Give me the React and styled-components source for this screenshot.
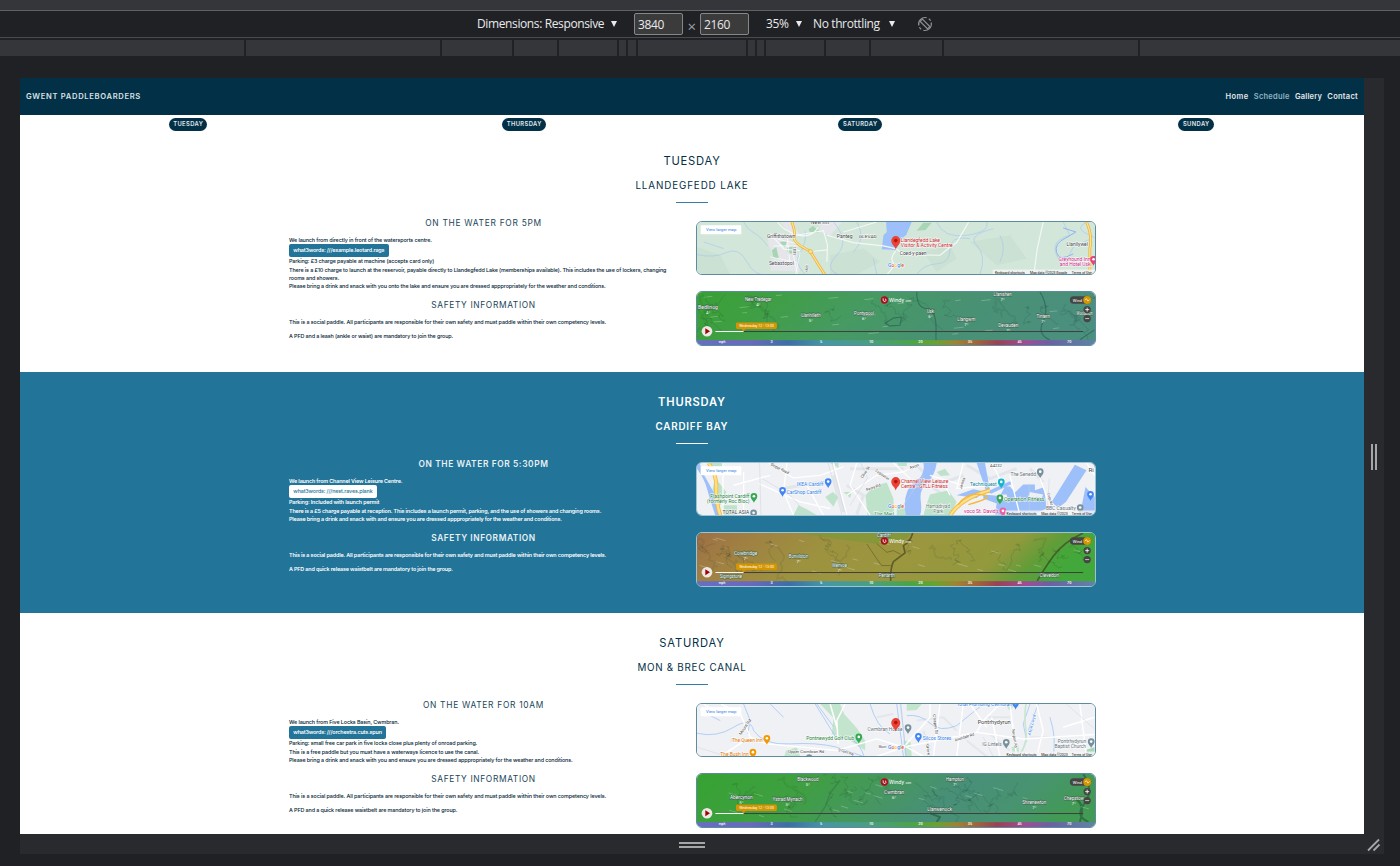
import React from "react";
import styled, { createGlobalStyle } from "styled-components";

const GlobalStyle = createGlobalStyle`
  * { box-sizing: border-box; }
  body { margin: 0; background: #202124; overflow: hidden; }
  h1, h2, h3, p { margin: 0; }
`;

/* ---------- Browser tools ---------- */

const Shell = styled.div`
  display: flex;
  flex-direction: column;
  width: 1400px;
  height: 866px;
  overflow: hidden;
  background: #202124;
`;

const TopStrip = styled.div`
  height: 11px;
  flex: none;
  background: #35363a;
  border-bottom: 1px solid #606164;
`;

const Toolbar = styled.div`
  display: flex;
  align-items: center;
  height: 27px;
  flex: none;
  padding-left: 477px;
  border-bottom: 1px solid #4a4b4e;
  color: #e8eaed;
  font: 400 12px/22px "Open Sans", sans-serif;
  letter-spacing: -0.38px;
  white-space: nowrap;
`;

const Select = styled.div`
  display: flex;
  align-items: center;
  width: ${(p) => p.$width}px;
  margin: 0 ${(p) => p.$after}px 0 ${(p) => p.$before || 0}px;
  justify-content: space-between;
`;

const Caret = styled.i`
  border: 4px solid transparent;
  border-width: 6px 3.5px 0;
  border-top-color: #e8eaed;
`;

const SizeField = styled.span`
  width: 49px;
  height: 22px;
  padding-left: 3px;
  border: 1px solid #868789;
  border-radius: 2px;
  background: #3b3b3b;
`;

const Times = styled.span`
  width: 17px;
  padding-top: 4px;
  text-align: center;
  font-size: 15px;
  color: #9aa0a6;
`;

const Ruler = styled.div`
  display: flex;
  gap: 2px;
  height: 18px;
  flex: none;
  padding: 2px 0 0;
`;

const RulerSpan = styled.div`
  flex: none;
  width: ${(p) => p.$width}px;
  background: #35363a;
`;

const Stage = styled.div`
  display: grid;
  grid-template: 756px 20px / 1344px 20px;
  width: 1364px;
  margin: 22px 0 0 20px;
`;

const Handle = styled.div`
  display: flex;
  align-items: center;
  justify-content: center;
  padding-top: 2px;
  background: #292a2d;
`;

const Grip = styled.i`
  width: ${(p) => (p.$wide ? 26 : 6)}px;
  height: ${(p) => (p.$wide ? 6 : 26)}px;
  border: solid #a5a6a8;
  border-width: ${(p) => (p.$wide ? "2px 0" : "0 2px")};
`;

/* ---------- Website ---------- */

const Site = styled.div`
  height: 756px;
  overflow: hidden;
  background: #fff;
  color: #023047;
  font-family: Inter, sans-serif;
`;

const Nav = styled.nav`
  display: flex;
  align-items: center;
  justify-content: space-between;
  height: 37px;
  padding: 0 6px;
  background: #023047;
  color: #d9e0e4;
  font-size: 7px;
  font-weight: 600;
`;

const Brand = styled.span`
  font-size: 7.6px;
  letter-spacing: 0.68px;
`;

const NavLinks = styled.div`
  display: flex;
  gap: 5.2px;
`;

const NavLink = styled.span`
  font-size: 7.5px;
  letter-spacing: ${(p) => p.$track}px;
  color: ${(p) => (p.$active ? "#8fb3c4" : "#e3e8eb")};
`;

const DayBar = styled.div`
  display: grid;
  grid-template-columns: repeat(4, 1fr);
  justify-items: center;
  height: 16px;
  padding-top: 3px;
`;

const DayPill = styled.span`
  height: 13px;
  padding: 0 4.2px 0 4.7px;
  border-radius: 7px;
  background: #023047;
  color: #e3e8eb;
  font-size: 5.8px;
  font-weight: 600;
  line-height: 12.5px;
  letter-spacing: 0.4px;
`;

const Section = styled.section`
  display: flex;
  flex-direction: column;
  align-items: center;
  height: 241px;
  padding-top: 23px;
  background: ${(p) => (p.$dark ? "#227499" : "#fff")};
  color: ${(p) => (p.$dark ? "#fff" : "#023047")};
  font-weight: ${(p) => (p.$dark ? 600 : 400)};
  white-space: nowrap;
`;

const DayTitle = styled.h1`
  font-size: 11.2px;
  font-weight: inherit;
  line-height: 14px;
  letter-spacing: 0.8px;
`;

const PlaceTitle = styled.h2`
  margin-top: 11px;
  font-size: 9.8px;
  font-weight: inherit;
  line-height: 14px;
  letter-spacing: ${(p) => p.$track}px;
`;

const Rule = styled.div`
  width: 32px;
  height: 1.4px;
  margin: 8.5px 0 13.1px;
  background: ${(p) => (p.$dark ? "#fff" : "#2f7fa3")};
`;

const Columns = styled.div`
  display: grid;
  grid-template-columns: 389px 399.5px;
  column-gap: 18px;
  width: 806.5px;
  margin-left: 0.5px;
`;

const SubHeading = styled.h3`
  margin: ${(p) => (p.$spaced ? 8 : 0)}px 0 6px;
  text-align: center;
  font-size: 8.4px;
  font-weight: inherit;
  line-height: 14px;
  letter-spacing: ${(p) => p.$track}px;
  opacity: 0.9;
`;

const Copy = styled.p`
  margin-bottom: ${(p) => p.$after || 0}px;
  font-size: 5.4px;
  font-weight: ${(p) => (p.$dark ? 600 : 500)};
  line-height: 8px;
  letter-spacing: ${(p) => (p.$dark ? -0.138 : -0.112) + (p.$loose ? 0.018 : 0)}px;
  color: ${(p) => (p.$dark ? "#fff" : "#012233")};
`;

const WordsBadge = styled.div`
  width: fit-content;
  height: 13px;
  padding: 0 4.3px;
  border-radius: 2px;
  background: ${(p) => (p.$dark ? "#fff" : "#227499")};
  color: ${(p) => (p.$dark ? "#227499" : "#fff")};
  font-size: 5.4px;
  font-weight: ${(p) => (p.$dark ? 500 : 600)};
  line-height: 12.5px;
  letter-spacing: ${(p) => (p.$dark ? -0.135 : -0.165)}px;
`;

const Media = styled.div`
  display: flex;
  flex-direction: column;
  gap: 16px;
  padding-top: 5px;
`;

const Frame = styled.div`
  height: 54.5px;
  border: 1px solid ${(p) => (p.$dark ? "#9cc4d6" : "#5d8ba0")};
  border-radius: 6px;
  overflow: hidden;
  svg { display: block; width: 100%; height: 100%; }
`;

/* ---------- Maps ---------- */

const MapText = styled.text`
  font-family: Roboto, sans-serif;
  font-size: ${(p) => p.$size || 15}px;
  font-weight: ${(p) => p.$weight || 400};
`;

function Label({ at, w, children, fill = "#3c4043", size, weight, halo = "#fff", rotate }) {
  const [x, y] = at;
  return (
    <MapText
      x={x}
      y={y}
      $size={size}
      $weight={weight}
      fill={fill}
      stroke={halo}
      strokeWidth={halo === "none" ? 0 : 2.5}
      paintOrder="stroke"
      textLength={w}
      lengthAdjust="spacingAndGlyphs"
      transform={rotate ? `rotate(${rotate} ${x} ${y})` : undefined}
    >
      {children}
    </MapText>
  );
}

function Pin({ x, y, color, scale = 1, dot = "#fff" }) {
  return (
    <g transform={`translate(${x} ${y}) scale(${scale})`}>
      <path d="M0 17C-2 9-10 6-10-3A10 10 0 0 1 10-3C10 6 2 9 0 17Z" fill={color} />
      <circle cy="-3" r="4" fill={dot} />
    </g>
  );
}

function MapControls({ short }) {
  return (
    <>
      <rect x="31" y="30" width="122" height="27" rx="2" fill="#fff" />
      <Label at={[47, 48]} w={91} fill="#2f7de8" size={12} halo="none">View larger map</Label>
      <Pin x={617} y={80} color="#ea4335" scale={1.35} dot="#b31412" />
      <Label at={[594, 156]} w={48} size={16} weight={500}>
        <tspan fill="#4285f4">G</tspan>
        <tspan fill="#ea4335">o</tspan>
        <tspan fill="#fbbc05">o</tspan>
        <tspan fill="#4285f4">g</tspan>
        <tspan fill="#34a853">l</tspan>
        <tspan fill="#ea4335">e</tspan>
      </Label>
      <rect x={short ? 946 : 908} y="163" width="310" height="17" fill="#f5f5f5" opacity=".8" />
      <Label at={[short ? 950 : 915, 175]} w={90} size={10} fill="#111" halo="none">Keyboard shortcuts</Label>
      <Label at={[short ? 1054 : 1020, 175]} w={short ? 80 : 112} size={10} fill="#111" halo="none">
        {short ? "Map data ©2023" : "Map data ©2023 Google"}
      </Label>
      <Label at={[1146, 175]} w={60} size={10} fill="#111" halo="none">Terms of Use</Label>
    </>
  );
}

const line = (stroke, width) => ({ fill: "none", stroke, strokeWidth: width, strokeLinejoin: "round" });

function LakeMap() {
  return (
    <svg viewBox="20 20 1194 158" preserveAspectRatio="none">
      <rect width="1230" height="200" fill="#d2e6da" />
      <path d="M20 95L90 120L120 178H20ZM420 120L520 100L570 140L500 178H420ZM840 80L960 60L1010 130L920 150ZM700 110L780 90L800 130L740 170Z" fill="#cae1d3" />
      <path d="M232 66L280 52L322 98L318 120L330 170L240 166L250 120L236 92ZM385 20H455L420 62L392 50ZM270 20H300L330 58L310 70Z" fill="#e4e6ea" />
      <path d="M355 42L368 32L385 45V52H360ZM245 105L258 95L266 130L250 128ZM290 98L308 92V115H294ZM268 80L290 78L284 96Z" fill="#a8d5b4" />
      <path d="M680 46L700 22H725L706 44Z" fill="#a8d5b4" />
      <path d="M588 20H665L648 60L632 72L618 104L575 102L580 60L590 50Z" fill="#9dc0fa" />
      <g {...line("#a3c4f5", 1.7)}>
        <path d="M20 118Q70 130 108 112T170 140T235 178M160 20Q170 42 190 52T232 92M345 48Q350 80 330 112T345 178M430 20Q480 78 440 120T445 178M500 20Q530 70 490 110M680 178Q700 148 740 146T780 102T840 70M740 20Q760 70 830 60T890 20M870 178Q890 120 860 90T910 40M930 60Q950 100 930 140M1120 20L1140 60Q1080 76 1100 120T1150 96L1200 72M1190 20Q1150 40 1200 60T1210 130M550 130L560 178M40 80L100 100" />
      </g>
      <path d="M1120 38L1158 50L1128 68Q1092 84 1100 112T1150 116" {...line("#8fb4ee", 3)} />
      <g {...line("#f4f8f6", 3.5)}>
        <path d="M262 20Q278 45 320 58T384 36M320 60L400 46L412 90L410 140M240 56L282 102L330 106M410 60L490 82L580 92L617 100L640 118L750 120Q780 96 800 82L836 20M617 108Q600 125 608 140T590 178M1060 20L1042 100L1032 178M460 50L560 20M372 108L412 104" />
      </g>
      <g {...line("#fff", 2)}><path d="M290 60L300 150M262 72L318 84M250 92L324 92M330 110L316 178M306 105L322 178M240 125L320 142" /></g>
      <path d="M305 20Q316 50 312 66T360 108Q385 150 405 180M1190 20Q1208 60 1200 100V178" {...line("#f2ad26", 8)} />
      <path d="M305 20Q316 50 312 66T360 108Q385 150 405 180M1190 20Q1208 60 1200 100V178" {...line("#fde293", 4)} />
      <circle cx="361" cy="109" r="6" fill="#fde293" stroke="#f2ad26" strokeWidth="2" />
      <Label at={[362, 26]} w={55}>New Inn</Label>
      <Label at={[230, 68]} w={85}>Griffithstown</Label>
      <Label at={[236, 149]} w={75}>Sebastopol</Label>
      <Label at={[440, 68]} w={47}>Panteg</Label>
      <Label at={[506, 68]} w={54} size={13}>GLEVAD</Label>
      <Label at={[629, 120]} w={80}>Coed-y-paen</Label>
      <Label at={[1130, 92]} w={64}>Llanllywel</Label>
      <Label at={[632, 79]} w={118} fill="#c5221f">Llandegfedd Lake</Label>
      <Label at={[632, 94]} w={156} fill="#c5221f">Visitor &amp; Activity Centre</Label>
      <Label at={[1106, 138]} w={96} fill="#d01884">Greyhound Inn</Label>
      <Label at={[1110, 153]} w={92} fill="#d01884">and Hotel Usk</Label>
      <Pin x={1211} y={135} color="#ec407a" />
      <Label at={[318, 120]} w={25} size={11} rotate={-90}>A4042</Label>
      <Label at={[352, 172]} w={24} size={11} rotate={-82}>A4051</Label>
      <MapControls />
    </svg>
  );
}

function BayMap() {
  return (
    <svg viewBox="20 23 1194 158" preserveAspectRatio="none">
      <rect width="1230" height="200" fill="#f0f1f4" />
      <g {...line("#e2e5ea", 9)}>
        <path d="M480 40H640M470 90L520 120L500 178M680 30L740 90L820 60M830 30L900 70L980 40M430 60L460 170M1020 40L1060 80M280 100L390 80M720 90L760 120" />
      </g>
      <path d="M55 23H100L88 60ZM75 68L108 110L90 150L60 130ZM95 150H140V180H95ZM552 92L590 82L610 130L612 180H532L526 120ZM720 118L775 105L800 140L780 180H700L712 140ZM325 150L350 162L380 180H310ZM405 125L428 110L444 125L430 155ZM460 110H485L480 128ZM620 150L650 160V180H620ZM740 50L765 40L780 60L752 62ZM420 23H445V38ZM620 23H650V32H626Z" fill="#bfe3ca" />
      <path d="M700 23H740Q735 60 710 85Q688 102 692 135T690 180H648Q638 142 652 108T688 70Q705 48 700 23Z" fill="#9dbffa" />
      <path d="M20 40Q42 70 50 100T75 180H92Q80 130 65 102T36 50L28 23H20Z" fill="#9dbffa" />
      <path d="M880 118L930 122L945 94H960L975 112L1000 88H1035V105L1062 96L1070 160L1030 178H915L920 145L880 130ZM1085 140L1155 28L1190 45L1128 140L1105 158ZM860 23H885L900 105L960 78L965 86L905 115L890 112ZM800 120L850 102L880 108L860 128Z" fill="#9dbffa" />
      <path d="M1187 95L1215 125V180H1170Z" fill="#9dbffa" />
      <path d="M935 118H950L955 135H935ZM1020 110L1060 118L1056 128L1015 124Z" fill="#edeff2" />
      <g {...line("#fff", 4)}>
        <path d="M98 23V180M235 23L310 68L390 60L460 35M205 85L330 140L420 160M430 23L470 180M500 23L480 90L540 180M470 120L560 60L640 50L690 23M610 23L660 70M820 23L800 100L905 90M960 60L990 180M1040 40L1090 178M1190 23L1215 60M160 50V180M290 23L280 110L310 180M350 90L400 180M720 60L820 90M760 80L780 120M130 90L240 60M905 23L940 90" />
      </g>
      <g {...line("#cdd2da", 1.5)}>
        <path d="M208 23L212 180M216 70L300 120L350 178M414 23L455 178M425 23L466 178M640 150L700 60M1078 70L1072 178M1018 85V178M512 23L532 68L480 150" />
      </g>
      <path d="M55 23Q80 60 78 100T90 180M780 182Q810 130 900 105" {...line("#f4b93c", 12)} />
      <path d="M55 23Q80 60 78 100T90 180M780 182Q810 130 900 105" {...line("#fddf8c", 7)} />
      <path d="M805 148Q830 110 875 118T835 148" {...line("#f4b93c", 4)} />
      <Label at={[320, 91]} w={80} fill="#2f7de8">IKEA Cardiff</Label>
      <Pin x={414} y={82} color="#4285f4" />
      <Label at={[289, 117]} w={105} fill="#2f7de8">CarShop Cardiff</Label>
      <Pin x={277} y={108} color="#4285f4" />
      <Label at={[60, 128]} w={118} fill="#188038">Flashpoint Cardiff</Label>
      <Label at={[50, 142]} w={128} fill="#188038">(formerly Roc Bloc)</Label>
      <Pin x={191} y={126} color="#34a853" />
      <Label at={[97, 178]} w={80}>TOTAL ASIA</Label>
      <Pin x={190} y={176} color="#78909c" />
      <Label at={[633, 84]} w={142} fill="#c5221f">Channel View Leisure</Label>
      <Label at={[633, 99]} w={140} fill="#c5221f">Centre - GTLL Fitness</Label>
      <Label at={[708, 158]} w={72} fill="#5f7a70">Hamadryad</Label>
      <Label at={[730, 172]} w={30} fill="#5f7a70">Park</Label>
      <Label at={[552, 180]} w={60} fill="#188038" size={13}>The Marl</Label>
      <Label at={[840, 91]} w={80} fill="#00838f">Techniquest</Label>
      <Pin x={934} y={83} color="#12b5cb" />
      <Label at={[942, 138]} w={122} fill="#188038">Operation Fitness</Label>
      <Pin x={930} y={131} color="#34a853" />
      <Label at={[822, 173]} w={105} fill="#d01884">voco St. David's</Label>
      <Pin x={939} y={170} color="#ec5fa0" />
      <Label at={[962, 61]} w={76} fill="#5f6f78">The Senedd</Label>
      <Pin x={1051} y={52} color="#78909c" />
      <Label at={[1068, 165]} w={90} fill="#5f6f78">BBC Casualty</Label>
      <Pin x={1171} y={160} color="#78909c" />
      <Pin x={1202} y={120} color="#4285f4" />
      <Label at={[1196, 51]} w={16}>Ri</Label>
      <Label at={[240, 30]} w={60} size={13} rotate={27}>Sloper Road</Label>
      <Label at={[530, 108]} w={45} size={12} rotate={-20}>Ferry Rd</Label>
      <Label at={[518, 70]} w={40} size={12} rotate={-58}>Clive St</Label>
      <Label at={[555, 48]} w={48} size={12} rotate={35}>Corporation</Label>
      <Label at={[815, 102]} w={35} size={12} rotate={-72}>James</Label>
      <Label at={[660, 42]} w={30} size={12} rotate={-20}>Avon</Label>
      <Label at={[900, 35]} w={36} size={12}>A4232</Label>
      <Label at={[1072, 115]} w={36} size={11} rotate={75}>Cargo Rd</Label>
      <g transform="translate(0 3)"><MapControls short /></g>
    </svg>
  );
}

function CanalMap() {
  return (
    <svg viewBox="20 20 1194 158" preserveAspectRatio="none">
      <rect width="1230" height="200" fill="#f0f1f4" />
      <path d="M390 20H450L462 50L500 92L525 130V160L480 130L425 110L430 62ZM288 160L320 150L330 178H282ZM650 20H695L680 38L650 40ZM640 130L662 134L665 178H645ZM945 20H975L960 40ZM965 150L985 145L990 178H970Z" fill="#c3e5cd" />
      <path d="M1190 158L1214 150V178H1186Z" fill="#a8d5b4" />
      <g {...line("#e3e6ec", 6)}><path d="M560 60L610 50M680 70L760 60L800 100M890 60H960M900 110L960 160M1020 120H1090M120 130H220M700 100L720 160M830 130L890 178" /></g>
      <g {...line("#a3c8f8", 2.5)}>
        <path d="M20 108Q80 122 130 90T190 100Q220 145 300 140T440 150L520 178M160 20L180 70L172 110M240 20L280 60M375 20L400 60L440 125Q500 110 522 178M380 20L430 88M620 20L640 178M632 20L648 178M650 55Q690 50 720 78T800 85L880 20M540 20Q560 90 600 110M1020 20L1000 80L1010 130L990 178M1045 20L1015 100M1080 60Q1100 120 1090 178M40 45L90 70" />
      </g>
      <path d="M1008 20Q1002 60 1008 100T985 178" {...line("#c9e6d2", 5)} />
      <g {...line("#fff", 4.5)}>
        <path d="M92 20L150 50L180 120L230 140L440 160L560 125L640 150L740 130L860 105L880 70L920 30L940 20M180 120L90 178M70 40L40 20M420 20L440 90M465 20L440 70L444 140M560 178L640 150L720 60V20M730 178L750 20M800 178L820 20M860 105L1000 125L1214 112M905 60L930 178M960 20L980 178M1040 20L1060 100L1040 178M1120 90L1214 60M1170 20L1190 178M650 150L700 178M840 20L890 90" />
      </g>
      <g {...line("#cfd6e0", 1.5)}><path d="M630 20L650 178M880 120L910 178M1130 20L1214 95M20 150L110 178" /></g>
      <Label at={[125, 133]} w={92} fill="#e37400">The Queen Inn</Label>
      <Pin x={230} y={126} color="#f29900" />
      <Label at={[90, 175]} w={85} fill="#e37400">The Bush Inn</Label>
      <Pin x={188} y={168} color="#f29900" />
      <Label at={[348, 129]} w={144} fill="#188038">Pontnewydd Golf Club</Label>
      <Pin x={506} y={122} color="#34a853" />
      <Label at={[532, 102]} w={105} fill="#5f6f78">Cwmbran House</Label>
      <Pin x={654} y={94} color="#78909c" />
      <Label at={[698, 128]} w={86} fill="#2f7de8">Silcox Stores</Label>
      <Pin x={685} y={120} color="#4285f4" />
      <Label at={[863, 79]} w={99} size={18}>Pontrhydyrun</Label>
      <Label at={[877, 145]} w={58} fill="#5f6f78">IG Lintels</Label>
      <Pin x={949} y={138} color="#78909c" />
      <Label at={[800, 27]} w={166} fill="#2f7de8">Total Plumbing Cwmbran</Label>
      <Pin x={977} y={20} color="#4285f4" />
      <Label at={[1104, 138]} w={85} fill="#5f6f78">Pontrhydyrun</Label>
      <Label at={[1094, 153]} w={94} fill="#5f6f78">Baptist Church</Label>
      <Pin x={1204} y={136} color="#78909c" />
      <Pin x={357} y={184} color="#78909c" />
      <Label at={[294, 166]} w={108} size={13}>Upper Cwmbran Rd</Label>
      <Label at={[442, 160]} w={50} size={12} rotate={18}>Ty Canol Way</Label>
      <Label at={[152, 114]} w={55} size={12} rotate={-55}>Mount Rd</Label>
      <Label at={[796, 133]} w={60} size={12} rotate={-18}>Avondale Rd</Label>
      <Label at={[728, 52]} w={60} size={12} rotate={82}>Chapel St</Label>
      <Label at={[708, 142]} w={32} size={12} rotate={82}>Grove</Label>
      <Label at={[1022, 115]} w={64} size={12} rotate={-76} fill="#2f7de8">Afon Lwyd</Label>
      <Label at={[566, 153]} w={23} size={11}>Mount</Label>
      <Label at={[966, 96]} w={56} size={12} rotate={82}>Newport Rd</Label>
      <MapControls short />
    </svg>
  );
}

/* ---------- Wind forecasts ---------- */

const scaleStops = [
  [0, "#6670c4"], [0.15, "#6b68bd"], [0.24, "#3d6ea8"], [0.33, "#4797a5"], [0.44, "#4a9f80"],
  [0.54, "#4ba544"], [0.6, "#6aa32f"], [0.65, "#a08234"], [0.7, "#a0643c"], [0.75, "#9c4055"],
  [0.82, "#a04c96"], [0.88, "#6c60a4"], [1, "#5e88a6"],
];

const scaleMarks = [[95, "mph"], [244, "3"], [393, "5"], [543, "10"], [691, "20"], [840, "35"], [989, "45"], [1138, "70"]];

function contours(seed, count) {
  let s = seed;
  const next = () => ((s = (s * 16807) % 2147483647) / 2147483647);
  return Array.from({ length: count }, () => {
    let x = next() * 1200;
    let y = 8 + next() * 60;
    let d = `M${x.toFixed(0)} ${y.toFixed(0)}`;
    for (let i = 0; i < 14; i += 1) {
      x += (next() - 0.42) * 30;
      y += (next() - 0.3) * 22;
      d += `L${x.toFixed(0)} ${y.toFixed(0)}`;
    }
    return d;
  }).join("");
}

function streaks(seed, count, from, slope) {
  let s = seed;
  const next = () => ((s = (s * 16807) % 2147483647) / 2147483647);
  return Array.from({ length: count }, () => {
    const x = from + next() * (1180 - from);
    const y = 10 + next() * 120;
    const w = 14 + next() * 18;
    return `M${x.toFixed(0)} ${y.toFixed(0)}l${w.toFixed(0)} ${(w * slope).toFixed(0)}`;
  }).join("");
}

function WindMap({ id, stops, places, seed, slope, children }) {
  return (
    <svg viewBox="20 2 1194 158" preserveAspectRatio="none">
      <defs>
        <linearGradient id={`${id}-land`} x1="0" x2="1" y1="0" y2="0.15">
          {stops.map(([o, c]) => <stop key={o} offset={o} stopColor={c} />)}
        </linearGradient>
        <linearGradient id={`${id}-scale`}>
          {scaleStops.map(([o, c]) => <stop key={o} offset={o} stopColor={c} />)}
        </linearGradient>
      </defs>
      <rect width="1230" height="170" fill={`url(#${id}-land)`} />
      {children}
      <path d={contours(seed, 16)} {...line("#18302a", 1.5)} opacity=".26" />
      <path d={contours(seed + 77, 7)} {...line("#10201c", 5)} opacity=".08" />
      <path d={streaks(seed + 5, 22, 20, slope)} {...line("#fff", 1.7)} opacity=".42" />
      {places.map(([x, y, w, name, temp]) => (
        <g key={name}>
          <Label at={[x - w / 2, y + 5]} w={w} fill="#fff" halo="#3c5f4c" size={14}>{name}</Label>
          {temp && <Label at={[x - 6, y + 20]} w={12} fill="#fff" halo="none" size={12}>{temp}</Label>}
        </g>
      ))}
      <path d="M75 121H1180" {...line("#3e3e3e", 3)} />
      <path d="M75 121H160" {...line("#fff", 3)} />
      <circle cx="50" cy="120" r="16" fill="#ebe8e6" />
      <path d="M45 111L59 120L45 129Z" fill="#9d0300" />
      <path d="M141 94H256Q260 94 260 98V109Q260 113 256 113H166L160 120L154 113H141Q137 113 137 109V98Q137 94 141 94Z" fill="#d49500" />
      <Label at={[147, 108]} w={104} fill="#fff" halo="none" size={12}>Wednesday 12 - 13:00</Label>
      <circle cx="583" cy="26" r="11" fill="#a80f1c" />
      <path d="M579 21Q577 31 585 31Q590 27 586 22" {...line("#fff", 2.5)} />
      <Label at={[597, 32]} w={45} fill="#fff" halo="none" size={18}>Windy</Label>
      <Label at={[645, 32]} w={18} fill="#fff" halo="none" size={8}>.com</Label>
      <rect x="1140" y="15" width="64" height="22" rx="11" fill="#454543" />
      <Label at={[1149, 31]} w={28} fill="#fff" halo="none" size={13}>Wind</Label>
      <circle cx="1192" cy="26" r="12" fill="#d49500" />
      <path d="M1185 26L1190 22L1194 29L1199 25" {...line("#fff", 2)} />
      <circle cx="1192" cy="55" r="11" fill="#454543" />
      <path d="M1186 55H1198M1192 49V61" {...line("#fff", 2.5)} />
      <circle cx="1192" cy="82" r="11" fill="#454543" />
      <path d="M1186 82H1198" {...line("#ddd", 2.5)} />
      <rect x="0" y="147" width="1230" height="20" fill={`url(#${id}-scale)`} />
      {scaleMarks.map(([x, t]) => (
        <Label key={t} at={[x - t.length * 3.3, 157]} w={t.length * 6.6} fill="#fff" halo="none" size={10} weight={500}>{t}</Label>
      ))}
    </svg>
  );
}

const greenStops = [[0, "#38a034"], [0.2, "#3f9f43"], [0.45, "#469a62"], [0.7, "#489173"], [1, "#4b8f7e"]];
const canalStops = [[0, "#36a332"], [0.3, "#3f9f41"], [0.5, "#46975f"], [0.68, "#488f78"], [0.85, "#489371"], [1, "#429a55"]];
const bayStops = [[0, "#9d6d46"], [0.15, "#a08042"], [0.35, "#9d923f"], [0.55, "#9c963f"], [0.8, "#92993d"], [0.9, "#609d38"], [1, "#47a83c"]];

const winds = {
  tuesday: (
    <WindMap id="lake" seed={4211} slope={-0.1} stops={greenStops} places={[
      [204, 25, 80, "New Tredegar", "4°"], [53, 47, 60, "Bedlinog", "4°"], [362, 71, 58, "Llanhilleth", "5°"],
      [522, 66, 60, "Pontypool", "6°"], [721, 60, 22, "Usk", "6°"], [829, 83, 54, "Llangwm", "7°"],
      [955, 103, 60, "Devauden", "7°"], [938, 9, 54, "Llanishen", "7°"], [1060, 76, 40, "Tintern", "7°"],
      [1184, 67, 48, "Woolaston", ""],
    ]}>
      <path d="M585 96L610 80L634 78L630 102L600 104ZM680 2Q680 50 710 52T738 120T750 146M1050 2Q1080 50 1060 90T1080 146M1170 146L1214 116" {...line("#285a4e", 3.5)} opacity=".6" />
    </WindMap>
  ),
  thursday: (
    <WindMap id="bay" seed={913} slope={0.28} stops={bayStops} places={[
      [166, 63, 70, "Cowbridge", "7°"], [325, 72, 58, "Bonvilston", "7°"], [448, 98, 45, "Wenvoe", "7°"],
      [590, 129, 48, "Penarth", ""], [1078, 129, 58, "Clevedon", ""], [122, 131, 67, "Sigingstone", ""],
      [581, 9, 42, "Cardiff", ""],
    ]}>
      <path d="M325 2H668L640 24L560 34L440 20Z" fill="#6d9b32" opacity=".45" />
      <path d="M1182 2Q1120 40 1090 72T1046 146H1230V0Z" fill="#3fa83b" opacity=".6" />
      <path d="M668 2Q660 30 640 40L645 62L610 88Q600 110 602 146M1180 2Q1120 30 1090 72T1042 146" {...line("#39351d", 5)} opacity=".6" />
      <path d="M530 35L560 80L575 100L602 100M560 34L590 60L610 55L632 66" {...line("#39351d", 2.5)} opacity=".45" />
    </WindMap>
  ),
  saturday: (
    <WindMap id="canal" seed={77123} slope={0.3} stops={canalStops} places={[
      [353, 19, 64, "Blackwood", "5°"], [153, 72, 68, "Abercynon", "5°"], [292, 79, 90, "Ystrad Mynach", "5°"],
      [612, 57, 60, "Cwmbran", "6°"], [795, 19, 54, "Hampton", "7°"], [1033, 86, 72, "Shirenewton", "7°"],
      [749, 108, 74, "Llanwenock", ""], [1152, 76, 60, "Chepstow", "7°"],
    ]}>
      <path d="M1150 72Q1190 90 1170 146M1180 2Q1214 50 1184 90T1196 146M720 120L750 132L740 146" {...line("#285a3c", 6)} opacity=".65" />
      <path d="M450 20L420 60L405 100L375 146" {...line("#285a3c", 4)} opacity=".3" />
    </WindMap>
  ),
};

/* ---------- Page ---------- */

const days = [
  {
    key: "tuesday", day: "TUESDAY", place: "LLANDEGFEDD LAKE", track: 0.9, map: <LakeMap />,
    heading: "ON THE WATER FOR 5PM", headTrack: 0.72,
    launch: "We launch from directly in front of the watersports centre.",
    words: "what3words: ///example.leotard.rags",
    parking: "Parking: £3 charge payable at machine (accepts card only)",
    notes: [
      "There is a £10 charge to launch at the reservoir, payable directly to Llandegfedd Lake (memberships available). This includes the use of lockers, changing",
      "rooms and showers.",
      "Please bring a drink and snack with you onto the lake and ensure you are dressed apppropriately for the weather and conditions.",
    ],
    kit: "A PFD and a leash (ankle or waist) are mandatory to join the group.",
  },
  {
    key: "thursday", dark: true, day: "THURSDAY", place: "CARDIFF BAY", track: 0.79, map: <BayMap />,
    heading: "ON THE WATER FOR 5:30PM", headTrack: 0.6,
    launch: "We launch from Channel View Leisure Centre.",
    words: "what3words: ///nest.raves.plank",
    parking: "Parking: Included with launch permit",
    notes: [
      "There is a £5 charge payable at reception. This includes a launch permit, parking, and the use of showers and changing rooms.",
      "Please bring a drink and snack with and ensure you are dressed apppropriately for the weather and conditions.",
    ],
    kit: "A PFD and quick release waistbelt are mandatory to join the group.",
  },
  {
    key: "saturday", day: "SATURDAY", place: "MON & BREC CANAL", track: 0.73, map: <CanalMap />,
    heading: "ON THE WATER FOR 10AM", headTrack: 0.71,
    launch: "We launch from Five Locks Basin, Cwmbran.",
    words: "what3words: ///orchestra.cuts.spun",
    parking: "Parking: small free car park in five locks close plus plenty of onroad parking.",
    notes: [
      "This is a free paddle but you must have a waterways licence to use the canal.",
      "Please bring a drink and snack with you and ensure you are dressed apppropriately for the weather and conditions.",
    ],
    kit: "A PFD and a quick release waistbelt are mandatory to join the group.",
  },
];

function DaySection({ item }) {
  const { dark } = item;
  return (
    <Section $dark={dark}>
      <DayTitle>{item.day}</DayTitle>
      <PlaceTitle $track={item.track}>{item.place}</PlaceTitle>
      <Rule $dark={dark} />
      <Columns>
        <div>
          <SubHeading $track={item.headTrack}>{item.heading}</SubHeading>
          <Copy $dark={dark}>{item.launch}</Copy>
          <WordsBadge $dark={dark}>{item.words}</WordsBadge>
          <Copy $dark={dark} $after={1}>{item.parking}</Copy>
          {item.notes.map((note) => <Copy key={note} $dark={dark}>{note}</Copy>)}
          <SubHeading $spaced $track={dark ? 0.56 : 0.64}>SAFETY INFORMATION</SubHeading>
          <Copy $dark={dark} $after={6} $loose>
            This is a social paddle. All participants are responsible for their own safety and must paddle within their own competency levels.
          </Copy>
          <Copy $dark={dark}>{item.kit}</Copy>
        </div>
        <Media>
          <Frame $dark={dark}>{item.map}</Frame>
          <Frame $dark={dark}>{winds[item.key]}</Frame>
        </Media>
      </Columns>
    </Section>
  );
}

const rulerSpans = [244, 194, 70, 43, 58, 7, 8, 108, 7, 7, 58, 43, 71, 194, 260];

export default function App() {
  return (
    <Shell>
      <GlobalStyle />
      <TopStrip />
      <Toolbar>
        <Select $width={140} $after={17}>Dimensions: Responsive<Caret /></Select>
        <SizeField>3840</SizeField>
        <Times>×</Times>
        <SizeField>2160</SizeField>
        <Select $width={36} $before={17} $after={11}>35%<Caret /></Select>
        <Select $width={82} $after={22}>No throttling<Caret /></Select>
        <svg width="16" height="16" viewBox="0 0 16 16" fill="none" stroke="#8d8f92" strokeWidth="1.2">
          <path d="M1.8 9.5A6.5 6.5 0 0 1 9.6 1.7M11.8 2.7A6.5 6.5 0 0 1 13.6 4.7M14.2 6.5A6.5 6.5 0 0 1 6.4 14.3M4.2 13.3A6.5 6.5 0 0 1 2.4 11.3" />
          <path d="M5.4 3.2L12.8 10.6L10.6 12.8L3.2 5.4Z" />
        </svg>
      </Toolbar>
      <Ruler>{rulerSpans.map((w, i) => <RulerSpan key={i} $width={w} />)}</Ruler>
      <Stage>
        <Site>
          <Nav>
            <Brand>GWENT PADDLEBOARDERS</Brand>
            <NavLinks>
              <NavLink $track={0.4}>Home</NavLink>
              <NavLink $track={0.25} $active>Schedule</NavLink>
              <NavLink $track={0.21}>Gallery</NavLink>
              <NavLink $track={0.28}>Contact</NavLink>
            </NavLinks>
          </Nav>
          <DayBar>
            {["TUESDAY", "THURSDAY", "SATURDAY", "SUNDAY"].map((d) => <DayPill key={d}>{d}</DayPill>)}
          </DayBar>
          {days.map((item) => <DaySection key={item.key} item={item} />)}
        </Site>
        <Handle><Grip /></Handle>
        <Handle><Grip $wide /></Handle>
        <Handle>
          <svg width="14" height="14" viewBox="0 0 14 14" fill="none" stroke="#a5a6a8" strokeWidth="1.8">
            <path d="M1 12.5L12 1.5M6.5 12.5L12.5 6.5" />
          </svg>
        </Handle>
      </Stage>
    </Shell>
  );
}
